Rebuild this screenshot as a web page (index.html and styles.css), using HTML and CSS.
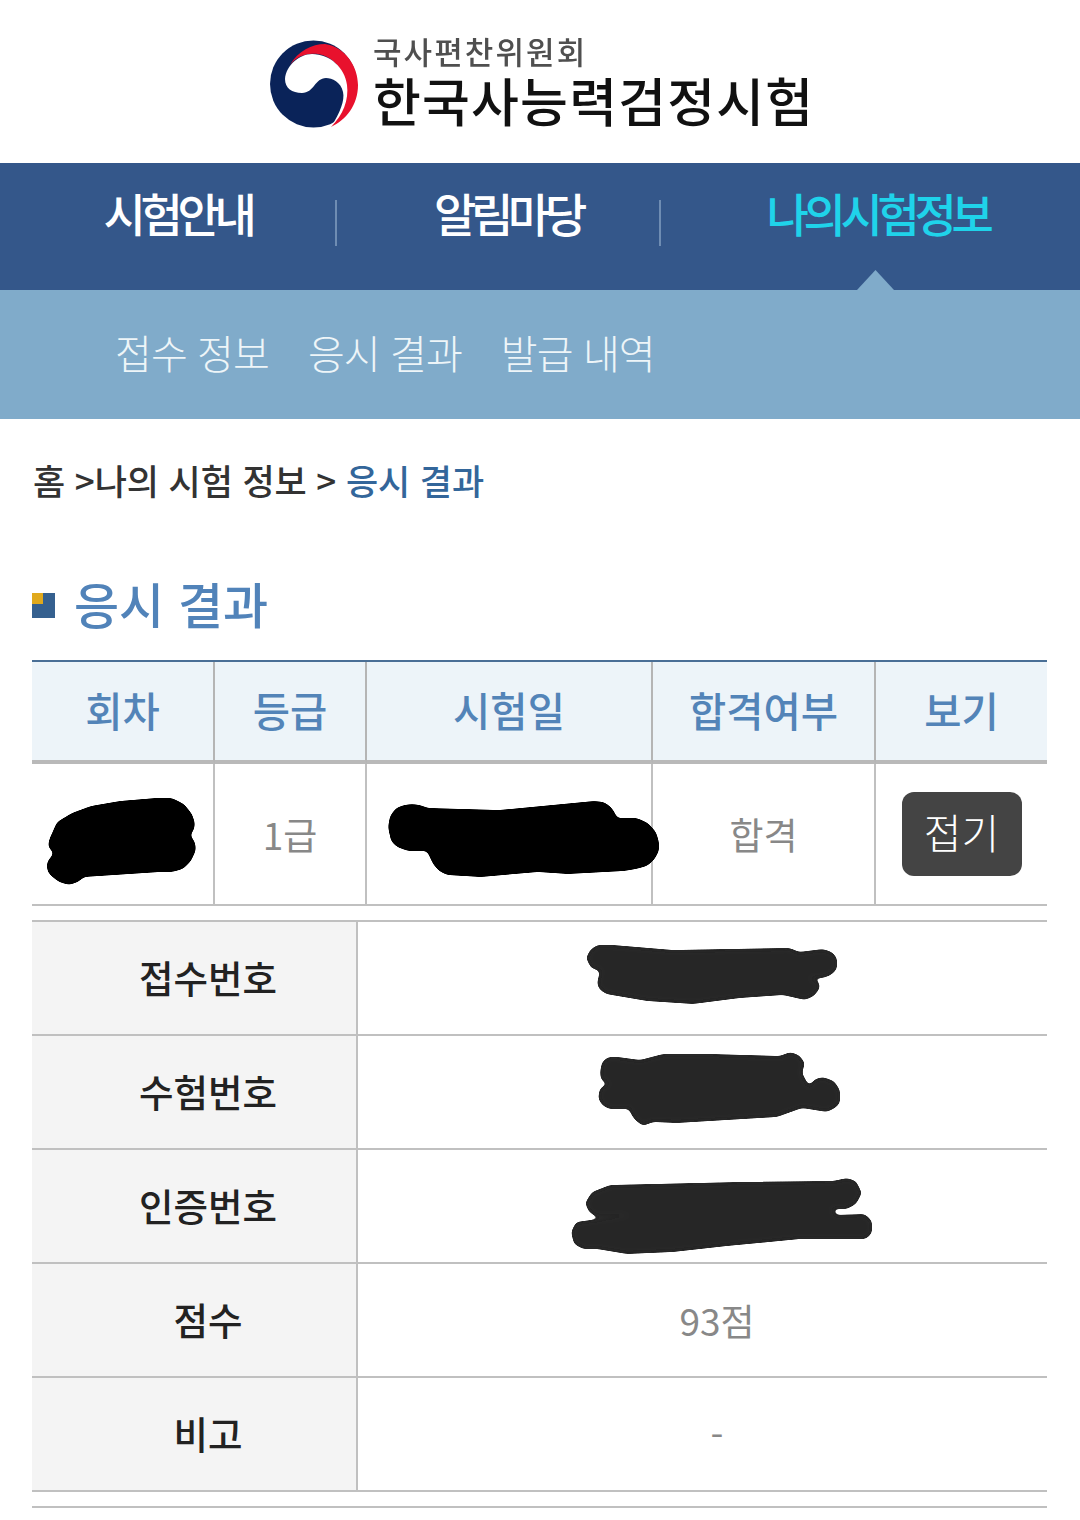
FILE: index.html
```html
<!DOCTYPE html>
<html lang="ko">
<head>
<meta charset="utf-8">
<title>응시 결과</title>
<link rel="stylesheet" href="styles.css">
</head>
<body>
<svg class="defs" width="0" height="0" aria-hidden="true">
  <filter id="round-ink" x="-10%" y="-20%" width="120%" height="140%">
    <feGaussianBlur stdDeviation="2.5"/>
    <feColorMatrix type="matrix" values="1 0 0 0 0  0 1 0 0 0  0 0 1 0 0  0 0 0 10 -4.5"/>
  </filter>
</svg>
<header class="logo-bar">
  <div class="logo">
    <svg class="emblem" viewBox="268 38 92 92" width="92" height="92" aria-hidden="true">
      <circle cx="313.5" cy="84" r="43.5" fill="#0a2359"/>
      <path d="M290 65C298 51 312 44 325 44C345 47 358 66 358 85C358 105 346 120 331 127C345 110 350 95 345 80C340 62 325 52 310 54C300 55 294 60 290 65Z" fill="#e8112d"/>
      <path d="M285 79C286 65 300 54 312 54C330 54 345 68 347 85C349 100 343 115 331 127C340 113 345 100 343 92C341 82 332 78 326 78C315 78 314 93 302 93C292 93 285 88 285 79Z" fill="#fff"/>
    </svg>
    <div class="logo-text">
      <div class="logo-org">국사편찬위원회</div>
      <div class="logo-name">한국사능력검정시험</div>
    </div>
  </div>
</header>
<nav class="main-nav">
  <a class="main-item">시험안내</a>
  <span class="main-sep"></span>
  <a class="main-item">알림마당</a>
  <span class="main-sep"></span>
  <a class="main-item main-item-last is-active">나의 시험 정보</a>
  <span class="nav-arrow"></span>
</nav>
<nav class="sub-nav">
  <a class="sub-item">접수 정보</a>
  <a class="sub-item">응시 결과</a>
  <a class="sub-item">발급 내역</a>
</nav>
<div class="crumbs">홈 &gt;나의 시험 정보 &gt; <strong class="crumb-now">응시 결과</strong></div>
<h1 class="page-title"><span class="title-mark"></span>응시 결과</h1>
<table class="result">
  <colgroup><col class="c1"><col class="c2"><col class="c3"><col class="c4"><col class="c5"></colgroup>
  <thead>
    <tr><th>회차</th><th>등급</th><th>시험일</th><th>합격여부</th><th class="last">보기</th></tr>
  </thead>
  <tbody>
    <tr>
      <td><svg class="scribble s1" viewBox="48 799 147 85" width="147" height="85" aria-hidden="true"><path d="M49 840 57 822 72 813 91 806 120 801 156 798 172 798 184 804 192 814 195 823 194 830 190 835 195 842 196 850 191 861 183 869 172 872 160 872 84 877 78 882 69 885 59 882 50 875 47 870 47 862 54 853 48 847Z" fill="#000"/></svg></td>
      <td>1급</td>
      <td><svg class="scribble s2" viewBox="389 801 269 76" width="269" height="76" aria-hidden="true"><path d="M388 827 390 816 396 808 404 805 412 804 420 805 428 808 499 810 594 801 604 802 611 807 615 813 617 818 637 818 648 823 656 832 659 842 659 851 654 860 647 866 636 869 624 871 568 874 538 872 481 877 447 875 439 871 433 864 427 851 408 851 397 847 391 841Z" fill="#000"/></svg></td>
      <td>합격</td>
      <td class="last"><button class="fold" type="button">접기</button></td>
    </tr>
  </tbody>
</table>
<table class="detail">
  <colgroup><col class="d1"><col class="d2"></colgroup>
  <tbody>
    <tr><th>접수번호</th><td class="value"><svg class="scribble s3" viewBox="588 945 248 59" width="248" height="59" aria-hidden="true"><path d="M586 958 590 950 597 945 613 945 673 950 790 948 799 952 823 949 832 952 837 958 837 969 831 975 823 978 811 978 819 982 820 988 814 996 805 1000 783 995 740 998 693 1004 647 1001 606 994 599 989 597 983 600 971 591 968Z" fill="#262626"/></svg></td></tr>
    <tr><th>수험번호</th><td class="value"><svg class="scribble s4" viewBox="600 1053 240 72" width="240" height="72" aria-hidden="true"><path d="M600 1072 602 1062 608 1057 618 1057 640 1060 663 1054 710 1054 780 1056 790 1052 799 1055 805 1063 802 1073 809 1086 815 1079 823 1077 834 1081 840 1090 840 1103 835 1108 827 1112 802 1108 777 1117 760 1118 677 1123 653 1122 643 1126 635 1120 631 1114 629 1109 609 1109 602 1105 598 1098 600 1088 608 1084 601 1080Z" fill="#262626"/></svg></td></tr>
    <tr><th>인증번호</th><td class="value"><svg class="scribble s5" viewBox="572 1179 299 75" width="299" height="75" aria-hidden="true"><path d="M585 1203 592 1192 610 1185 740 1182 833 1181 847 1178 856 1181 862 1193 856 1204 847 1209 833 1209 836 1215 865 1214 872 1221 872 1233 866 1239 800 1239 727 1246 673 1252 627 1254 597 1249 583 1249 574 1244 571 1232 576 1222 628 1215 597 1217 589 1212Z" fill="#262626"/></svg></td></tr>
    <tr><th>점수</th><td class="value">93점</td></tr>
    <tr><th>비고</th><td class="value">-</td></tr>
  </tbody>
</table>
<div class="end-rule"></div>
</body>
</html>
```

FILE: styles.css
```css
* { box-sizing: border-box; }
html, body { margin: 0; padding: 0; }
body {
  width: 1080px;
  height: 1520px;
  overflow: hidden;
  background: #fff;
  font-family: "Noto Sans CJK KR", "Noto Sans", sans-serif;
  color: #333;
}
.defs { position: absolute; }

/* logo */
.logo-bar {
  height: 163px;
  display: flex;
  justify-content: center;
  align-items: flex-start;
  padding-top: 33px;
}
.logo { display: flex; width: 542px; gap: 13px; margin-left: -2px; filter: blur(0.7px); }
.emblem { flex: none; margin-top: 5px; }
.logo-text { display: flex; flex-direction: column; }
.logo-org {
  font-size: 31px;
  line-height: 36px;
  font-weight: 500;
  letter-spacing: 2.1px;
  color: #4f4f4f;
}
.logo-name {
  font-size: 52px;
  line-height: 56px;
  font-weight: 500;
  letter-spacing: 1.2px;
  color: #111;
  white-space: nowrap;
  margin-top: 3px;
}

/* main nav */
.main-nav {
  position: relative;
  height: 127px;
  background: #34578a;
  display: flex;
  align-items: flex-start;
  color: #fff;
}
.main-item {
  display: block;
  padding-top: 19px;
  padding-left: 20px;
  width: 335px;
  text-align: center;
  font-size: 46px;
  line-height: 60px;
  font-weight: 500;
  letter-spacing: -5.3px;
  white-space: nowrap;
}
.main-item + .main-sep + .main-item { width: 322px; }
.main-item-last.main-item-last { flex: 1; width: auto; padding-left: 14px; word-spacing: -7.7px; }
.is-active { color: #1fd3ea; }
.main-sep {
  flex: none;
  width: 2px;
  height: 46px;
  margin-top: 37px;
  background: #6f8db3;
}
.nav-arrow {
  position: absolute;
  left: 857px;
  bottom: 0;
  width: 37px;
  height: 20px;
  background: #80abca;
  clip-path: polygon(50% 0, 100% 100%, 0 100%);
}

/* sub nav */
.sub-nav {
  height: 129px;
  background: #80abca;
  display: flex;
  gap: 39px;
  padding: 33px 0 0 115px;
}
.sub-item {
  font-size: 40px;
  line-height: 58px;
  font-weight: 300;
  letter-spacing: -0.9px;
  color: #eef5f8;
  white-space: nowrap;
}

/* breadcrumb and title */
.crumbs {
  height: 120px;
  display: flex;
  align-items: center;
  padding-left: 33px;
  margin-bottom: 4px;
  font-size: 35px;
  font-weight: 500;
  letter-spacing: -0.1px;
  color: #333;
  white-space: pre;
}
.crumb-now { font-weight: 500; color: #33669a; }
.page-title {
  height: 117px;
  margin: 0;
  padding: 1px 0 0 32px;
  display: flex;
  align-items: center;
  font-size: 49px;
  font-weight: 500;
  color: #5183b9;
}
.title-mark {
  width: 23px;
  height: 25px;
  margin-right: 19px;
  margin-top: 6px;
  background: linear-gradient(#e0a91c, #e0a91c) 0 0 / 11px 11px no-repeat, #35608f;
}

/* tables */
table {
  border-collapse: separate;
  border-spacing: 0;
  table-layout: fixed;
  width: 1015px;
  margin-left: 32px;
}
.c1 { width: 183px; }
.c2 { width: 152px; }
.c3 { width: 286px; }
.c4 { width: 223px; }
.c5 { width: 171px; }
.d1 { width: 326px; }
.d2 { width: 689px; }

.result { border-top: 2px solid #4a6f96; }
.result th {
  height: 102px;
  padding: 0 0 4px;
  background: #edf4f9;
  border-right: 2px solid #b5b5b5;
  border-bottom: 4px solid #b9b9b9;
  font-size: 40.5px;
  font-weight: 500;
  color: #5384b8;
}
.result td {
  position: relative;
  height: 142px;
  padding: 0;
  text-align: center;
  border-right: 2px solid #c0c0c0;
  border-bottom: 2px solid #c0c0c0;
  font-size: 37px;
  color: #888;
}
.result .last { border-right: 0; }

.fold {
  display: inline-block;
  vertical-align: middle;
  width: 120px;
  height: 84px;
  padding: 0 0 6px;
  border: 0;
  border-radius: 12px;
  background: #444;
  color: #fff;
  font-family: inherit;
  font-size: 41px;
  font-weight: 300;
}

.detail { margin-top: 14px; border-top: 2px solid #c0c0c0; }
.detail th {
  height: 114px;
  padding: 0 0 3px 28px;
  background: #f4f4f4;
  border-right: 2px solid #c0c0c0;
  border-bottom: 2px solid #c0c0c0;
  font-size: 37.5px;
  font-weight: 500;
  color: #222;
}
.detail td {
  position: relative;
  height: 114px;
  padding: 0 0 0 29px;
  text-align: center;
  border-bottom: 2px solid #c0c0c0;
  font-size: 37px;
  color: #888;
}

.scribble { position: absolute; overflow: visible; }
.scribble path { filter: url(#round-ink); }
.s1 { left: 16px; top: 35px; }
.s2 { left: 22px; top: 37px; }
.s3 { left: 230px; top: 23px; }
.s4 { left: 242px; top: 17px; }
.s5 { left: 214px; top: 29px; }

.end-rule {
  width: 1015px;
  height: 2px;
  margin: 14px 0 0 32px;
  background: #c0c0c0;
}
```
